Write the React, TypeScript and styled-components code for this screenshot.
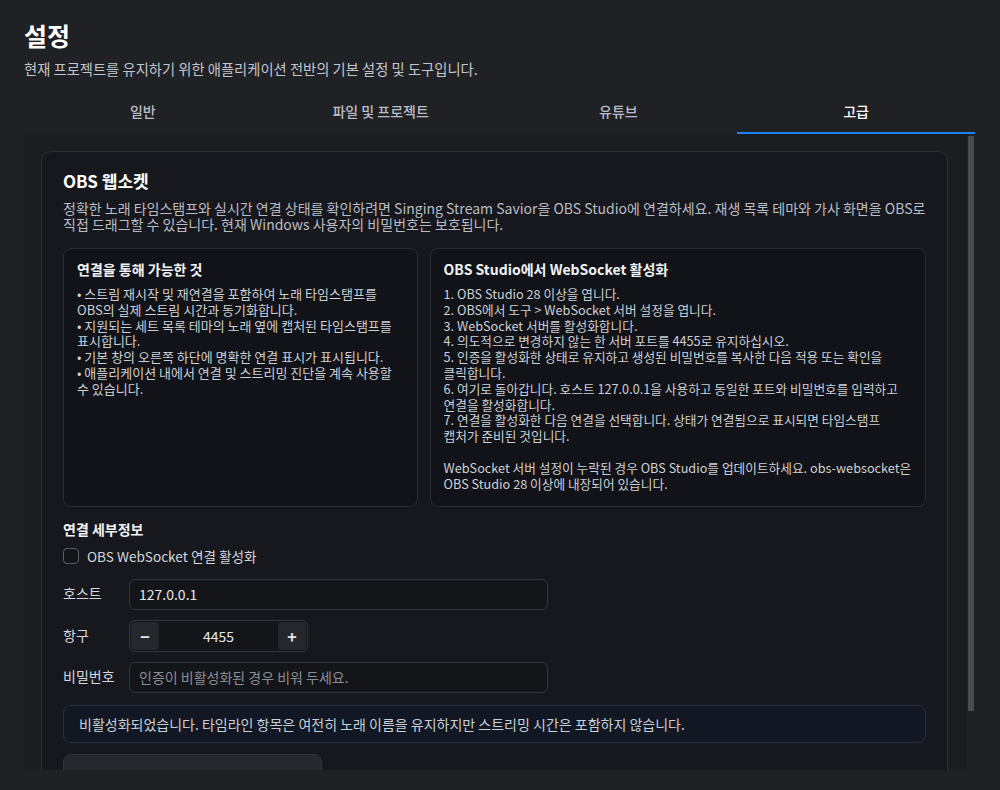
import React, { useState } from "react";
import styled, { createGlobalStyle } from "styled-components";

const FONT = `"Noto Sans CJK KR", "Noto Sans", sans-serif`;

const GlobalStyle = createGlobalStyle`
  html, body {
    margin: 0;
    padding: 0;
    background: #202125;
    font-family: ${FONT};
    color: #d4d7dd;
    word-break: keep-all;
  }
  * {
    box-sizing: border-box;
  }
`;

const TABS = ["일반", "파일 및 프로젝트", "유튜브", "고급"];

const CAPABILITIES = [
  "• 스트림 재시작 및 재연결을 포함하여 노래 타임스탬프를 OBS의 실제 스트림 시간과 동기화합니다.",
  "• 지원되는 세트 목록 테마의 노래 옆에 캡처된 타임스탬프를 표시합니다.",
  "• 기본 창의 오른쪽 하단에 명확한 연결 표시가 표시됩니다.",
  "• 애플리케이션 내에서 연결 및 스트리밍 진단을 계속 사용할 수 있습니다.",
];

const STEPS = [
  "1. OBS Studio 28 이상을 엽니다.",
  "2. OBS에서 도구 > WebSocket 서버 설정을 엽니다.",
  "3. WebSocket 서버를 활성화합니다.",
  "4. 의도적으로 변경하지 않는 한 서버 포트를 4455로 유지하십시오.",
  "5. 인증을 활성화한 상태로 유지하고 생성된 비밀번호를 복사한 다음 적용 또는 확인을 클릭합니다.",
  "6. 여기로 돌아갑니다. 호스트 127.0.0.1을 사용하고 동일한 포트와 비밀번호를 입력하고 연결을 활성화합니다.",
  "7. 연결을 활성화한 다음 연결을 선택합니다. 상태가 연결됨으로 표시되면 타임스탬프 캡처가 준비된 것입니다.",
];

function App() {
  const [port, setPort] = useState(4455);
  const [enabled, setEnabled] = useState(false);

  return (
    <Page>
      <GlobalStyle />
      <Header>
        <Title>설정</Title>
        <Subtitle>현재 프로젝트를 유지하기 위한 애플리케이션 전반의 기본 설정 및 도구입니다.</Subtitle>
      </Header>

      <TabBar>
        {TABS.map((tab) => (
          <Tab key={tab} $active={tab === "고급"}>
            {tab}
          </Tab>
        ))}
      </TabBar>

      <ScrollArea>
        <Viewport>
          <Card>
            <CardTitle>OBS 웹소켓</CardTitle>
            <CardDesc>
              정확한 노래 타임스탬프와 실시간 연결 상태를 확인하려면 Singing Stream Savior을 OBS
              Studio에 연결하세요. 재생 목록 테마와 가사 화면을 OBS로 직접 드래그할 수 있습니다. 현재
              Windows 사용자의 비밀번호는 보호됩니다.
            </CardDesc>

            <InfoGrid>
              <InfoBox>
                <InfoTitle>연결을 통해 가능한 것</InfoTitle>
                <InfoText>
                  {CAPABILITIES.map((line) => (
                    <div key={line}>{line}</div>
                  ))}
                </InfoText>
              </InfoBox>
              <InfoBox>
                <InfoTitle>OBS Studio에서 WebSocket 활성화</InfoTitle>
                <InfoText $compact>
                  {STEPS.map((line) => (
                    <div key={line}>{line}</div>
                  ))}
                </InfoText>
                <InfoNote $compact>
                  WebSocket 서버 설정이 누락된 경우 OBS Studio를 업데이트하세요. obs-websocket은
                  OBS Studio 28 이상에 내장되어 있습니다.
                </InfoNote>
              </InfoBox>
            </InfoGrid>

            <SectionTitle>연결 세부정보</SectionTitle>
            <CheckRow>
              <CheckBox
                type="checkbox"
                checked={enabled}
                onChange={(e) => setEnabled(e.target.checked)}
              />
              <span>OBS WebSocket 연결 활성화</span>
            </CheckRow>

            <Fields>
              <FieldRow>
                <FieldLabel>호스트</FieldLabel>
                <TextInput defaultValue="127.0.0.1" />
              </FieldRow>
              <FieldRow>
                <FieldLabel>항구</FieldLabel>
                <Stepper>
                  <StepButton onClick={() => setPort(port - 1)}>−</StepButton>
                  <StepValue>{port}</StepValue>
                  <StepButton onClick={() => setPort(port + 1)}>+</StepButton>
                </Stepper>
              </FieldRow>
              <FieldRow>
                <FieldLabel>비밀번호</FieldLabel>
                <TextInput type="password" placeholder="인증이 비활성화된 경우 비워 두세요." />
              </FieldRow>
            </Fields>

            <Notice>
              비활성화되었습니다. 타임라인 항목은 여전히 노래 이름을 유지하지만 스트리밍 시간은
              포함하지 않습니다.
            </Notice>

            <StatusBox />
          </Card>
        </Viewport>
        <ScrollTrack>
          <ScrollThumb />
        </ScrollTrack>
      </ScrollArea>
    </Page>
  );
}

export default App;

const Page = styled.div`
  display: flex;
  flex-direction: column;
  height: 790px;
  padding: 0 25px 20px 24px;
  overflow: hidden;
`;

const Header = styled.header`
  padding-top: 18px;
`;

const Title = styled.h1`
  margin: 0;
  font-size: 25px;
  line-height: 34px;
  font-weight: 700;
  color: #ffffff;
`;

const Subtitle = styled.p`
  margin: 8px 0 0;
  font-size: 14.3px;
  line-height: 18px;
  color: #c3c6cd;
`;

const TabBar = styled.nav`
  display: grid;
  grid-template-columns: repeat(4, 1fr);
  margin-top: 12px;
`;

const Tab = styled.button<{ $active?: boolean }>`
  height: 44px;
  padding: 0;
  border: none;
  border-bottom: 2px solid ${(p) => (p.$active ? "#1a84f5" : "transparent")};
  background: transparent;
  font-family: ${FONT};
  font-size: 14px;
  font-weight: 500;
  color: ${(p) => (p.$active ? "#ffffff" : "#b9bdc6")};
  cursor: pointer;
`;

const ScrollArea = styled.div`
  flex: 1;
  min-height: 0;
  display: flex;
  background: #1c1d21;
`;

const Viewport = styled.div`
  flex: 1;
  min-width: 0;
  overflow-y: auto;
  scrollbar-width: none;
  padding: 17px 19px 16px 17px;

  &::-webkit-scrollbar {
    display: none;
  }
`;

const ScrollTrack = styled.div`
  width: 8px;
  padding: 2px 1px 0;
  background: #202125;
`;

const ScrollThumb = styled.div`
  height: 575px;
  background: #4a4a50;
`;

const Card = styled.section`
  background: #17181d;
  border: 1px solid #2d2f36;
  border-radius: 10px;
  padding: 18px 21px 22px;
`;

const CardTitle = styled.h2`
  margin: 0;
  font-size: 17px;
  line-height: 22px;
  font-weight: 700;
  color: #ffffff;
`;

const CardDesc = styled.p`
  margin: 8px 0 0;
  font-size: 14px;
  line-height: 16px;
  color: #b9bdc5;
`;

const InfoGrid = styled.div`
  display: grid;
  grid-template-columns: 1fr 1.4fr;
  gap: 12px;
  margin-top: 16px;
`;

const InfoBox = styled.div`
  background: #111318;
  border: 1px solid #2a2d35;
  border-radius: 8px;
  padding: 11px 13px 14px;
`;

const InfoTitle = styled.h3`
  margin: 0;
  font-size: 14px;
  line-height: 18px;
  font-weight: 700;
  color: #f2f3f5;
`;

const InfoText = styled.div<{ $compact?: boolean }>`
  margin-top: 8px;
  font-size: ${(p) => (p.$compact ? "12.7px" : "13px")};
  line-height: 15.8px;
  color: #cdd0d6;
`;

const InfoNote = styled(InfoText)`
  margin-top: 16px;
`;

const SectionTitle = styled.h3`
  margin: 13px 0 0;
  font-size: 14px;
  line-height: 18px;
  font-weight: 700;
  color: #f2f3f5;
`;

const CheckRow = styled.label`
  display: flex;
  align-items: center;
  gap: 8px;
  margin-top: 9px;
  font-size: 13.6px;
  line-height: 18px;
  color: #d4d7dd;
`;

const CheckBox = styled.input`
  appearance: none;
  width: 16px;
  height: 16px;
  margin: 0;
  border: 1px solid #5b5e66;
  border-radius: 4px;
  background: #141519;
`;

const Fields = styled.div`
  display: flex;
  flex-direction: column;
  gap: 10px;
  margin-top: 14px;
`;

const FieldRow = styled.div`
  display: grid;
  grid-template-columns: 56px 419px;
  column-gap: 10px;
  align-items: center;
`;

const FieldLabel = styled.span`
  font-size: 14px;
  line-height: 18px;
  color: #d4d7dd;
  margin-top: -2px;
`;

const TextInput = styled.input`
  height: 31px;
  padding: 0 9px;
  border: 1px solid #34363d;
  border-radius: 6px;
  background: #141519;
  font-family: ${FONT};
  font-size: 14px;
  color: #e6e8ec;
  outline: none;

  &::placeholder {
    color: #8a8e96;
  }
`;

const Stepper = styled.div`
  display: flex;
  align-items: center;
  width: 179px;
  height: 32px;
  padding: 1px;
  border: 1px solid #34363d;
  border-radius: 6px;
  background: #141519;
`;

const StepButton = styled.button`
  width: 28px;
  height: 28px;
  padding: 0;
  border: none;
  border-radius: 4px;
  background: #25272d;
  font-family: ${FONT};
  font-size: 16px;
  font-weight: 700;
  color: #e4e6ea;
  cursor: pointer;
`;

const StepValue = styled.span`
  flex: 1;
  text-align: center;
  font-size: 14px;
  color: #e6e8ec;
`;

const Notice = styled.div`
  margin-top: 12px;
  padding: 10px 15px;
  background: #111723;
  border: 1px solid #263042;
  border-radius: 8px;
  font-size: 14px;
  line-height: 16px;
  color: #c9d0da;
`;

const StatusBox = styled.div`
  width: 259px;
  height: 46px;
  margin-top: 11px;
  background: #25272d;
  border: 1px solid #33353c;
  border-radius: 8px;
`;
